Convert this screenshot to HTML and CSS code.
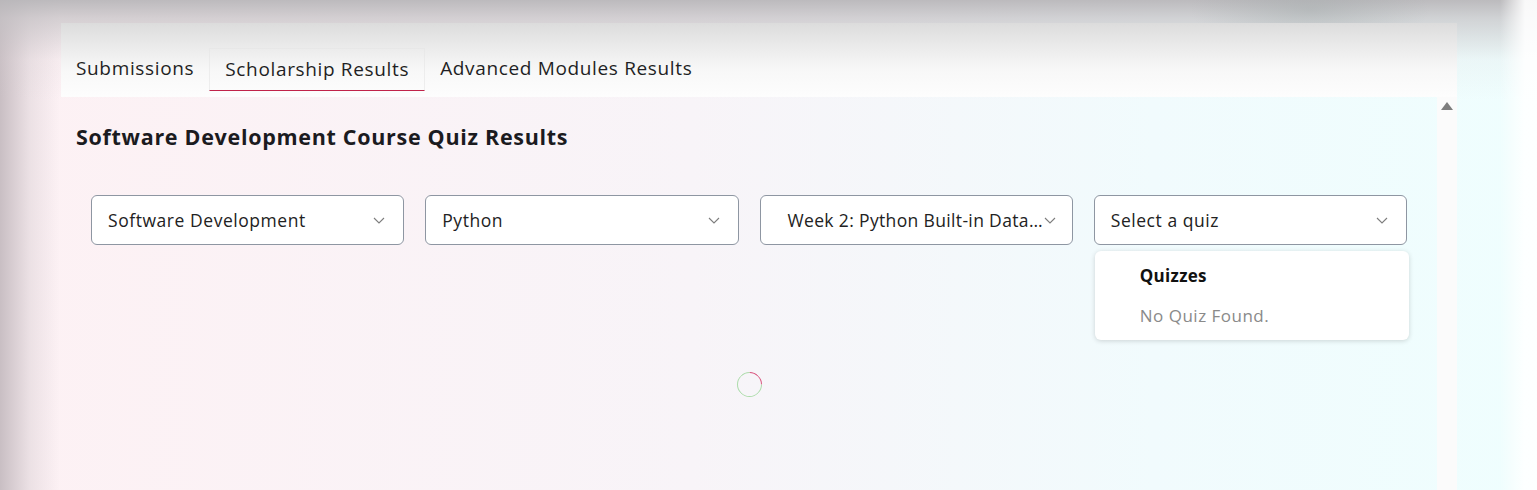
FILE: index.html
```html
<!DOCTYPE html>
<html lang="en">
<head>
<meta charset="utf-8">
<title>Quiz Results</title>
<link rel="stylesheet" href="styles.css">
</head>
<body>
<div class="page">
  <div class="card">
    <nav class="tabs">
      <div class="tab">Submissions</div>
      <div class="tab tab-active">Scholarship Results</div>
      <div class="tab">Advanced Modules Results</div>
    </nav>
    <div class="body">
      <main class="content">
        <h1 class="title">Software Development Course Quiz Results</h1>
        <div class="filters">
          <div class="select"><span class="select-text">Software Development</span><svg class="chev" viewBox="0 0 12 7"><path d="M1 1l5 5 5-5" fill="none" stroke="currentColor" stroke-width="1.1"/></svg></div>
          <div class="select"><span class="select-text">Python</span><svg class="chev" viewBox="0 0 12 7"><path d="M1 1l5 5 5-5" fill="none" stroke="currentColor" stroke-width="1.1"/></svg></div>
          <div class="select select-wide"><span class="select-text">Week 2: Python Built-in Data…</span><svg class="chev" viewBox="0 0 12 7"><path d="M1 1l5 5 5-5" fill="none" stroke="currentColor" stroke-width="1.1"/></svg></div>
          <div class="select-wrap">
            <div class="select"><span class="select-text">Select a quiz</span><svg class="chev" viewBox="0 0 12 7"><path d="M1 1l5 5 5-5" fill="none" stroke="currentColor" stroke-width="1.1"/></svg></div>
            <div class="menu">
              <div class="menu-head">Quizzes</div>
              <div class="menu-empty">No Quiz Found.</div>
            </div>
          </div>
        </div>
        <div class="loader"><div class="spinner"></div></div>
      </main>
      <div class="scrollbar"><span class="arrow"></span></div>
    </div>
  </div>
</div>
</body>
</html>
```

FILE: styles.css
```css
* { box-sizing: border-box; }
html, body { margin: 0; height: 100%; }
body {
  font-family: "Open Sans", "Liberation Sans", sans-serif;
  color: #1f1f24;
  overflow: hidden;
  background: linear-gradient(to right, #fdf1f4 0%, #f8f4f8 45%, #f1fbfd 75%, #effefe 100%);
}
.page {
  height: 490px;
  padding: 23px 0 0 61px;
  background:
    radial-gradient(ellipse 120px 40px at 1310px 10px, rgba(150,160,160,0.35), transparent),
    linear-gradient(to right, transparent 1500px, rgba(255,255,255,0.9) 1525px),
    linear-gradient(to bottom, rgba(185,183,186,0.95) 0px, rgba(195,192,195,0.7) 18px, rgba(210,205,208,0.15) 60px, transparent 100px),
    linear-gradient(to right, rgba(195,185,190,0.9) 0px, rgba(215,205,210,0.45) 30px, transparent 60px);
}
.card { width: 1396px; }
.tabs {
  height: 74px;
  display: flex;
  align-items: flex-end;
  padding-bottom: 6px;
  background: linear-gradient(to bottom, #dcdcdc 0%, #ececec 35%, #f8f8f8 65%, #fdfdfd 100%);
}
.tab {
  padding: 0 15px;
  height: 43px;
  line-height: 40px;
  font-size: 19px;
  letter-spacing: 0.65px;
  color: #1f1f24;
  white-space: nowrap;
}
.tab-active {
  border: 1px solid rgba(230,230,230,0.6);
  border-bottom: 1.5px solid #c0234a;
}
.body { display: flex; height: 393px; }
.content { flex: 1; padding: 24px 0 0; position: relative; }
.title {
  margin: 0;
  padding: 0 15px;
  font-size: 21.5px;
  font-weight: 700;
  letter-spacing: 0.7px;
  line-height: 32px;
  color: #1b1b1f;
}
.filters {
  margin-top: 42px;
  padding: 0 30px;
  display: grid;
  grid-template-columns: repeat(4, minmax(0, 1fr));
  gap: 21px;
}
.select-wrap { position: relative; min-width: 0; }
.select {
  height: 50px;
  border: 1px solid #8e96a2;
  border-radius: 6px;
  background: #fff;
  display: flex;
  align-items: center;
  padding: 0 18px 0 16px;
  font-size: 17.5px;
  letter-spacing: 0.55px;
  color: #222;
  min-width: 0;
}
.select-text { flex: 1; min-width: 0; white-space: nowrap; }
.select-wide { padding-left: 27px; padding-right: 16px; }
.select-wide .select-text { letter-spacing: 0.35px; }
.chev { width: 12px; height: 7px; color: #7d7d7d; flex: none; margin-left: 2px; }
.menu {
  position: absolute;
  top: 56px;
  left: 1px;
  right: -2px;
  height: 89px;
  background: #fff;
  border-radius: 6px;
  box-shadow: 0 1px 5px rgba(0,0,0,0.16);
  padding: 13px 0 0 45px;
}
.menu-head { font-size: 17px; font-weight: 700; letter-spacing: 0.3px; line-height: 24px; color: #111; }
.menu-empty { margin-top: 16px; font-size: 17px; letter-spacing: 0.5px; line-height: 24px; color: #8a8a8a; }
.loader { display: flex; justify-content: center; margin-top: 127px; }
.spinner {
  width: 25px; height: 25px;
  border-radius: 50%;
  border: 1.5px solid #acdcaa;
  border-top-color: #d8507a;
  transform: rotate(45deg);
}
.scrollbar { width: 20px; background: #fbfbfb; display: flex; justify-content: center; padding-top: 5px; }
.arrow {
  width: 0; height: 0;
  border-left: 6px solid transparent;
  border-right: 6px solid transparent;
  border-bottom: 8px solid #7d7d7d;
}
```
